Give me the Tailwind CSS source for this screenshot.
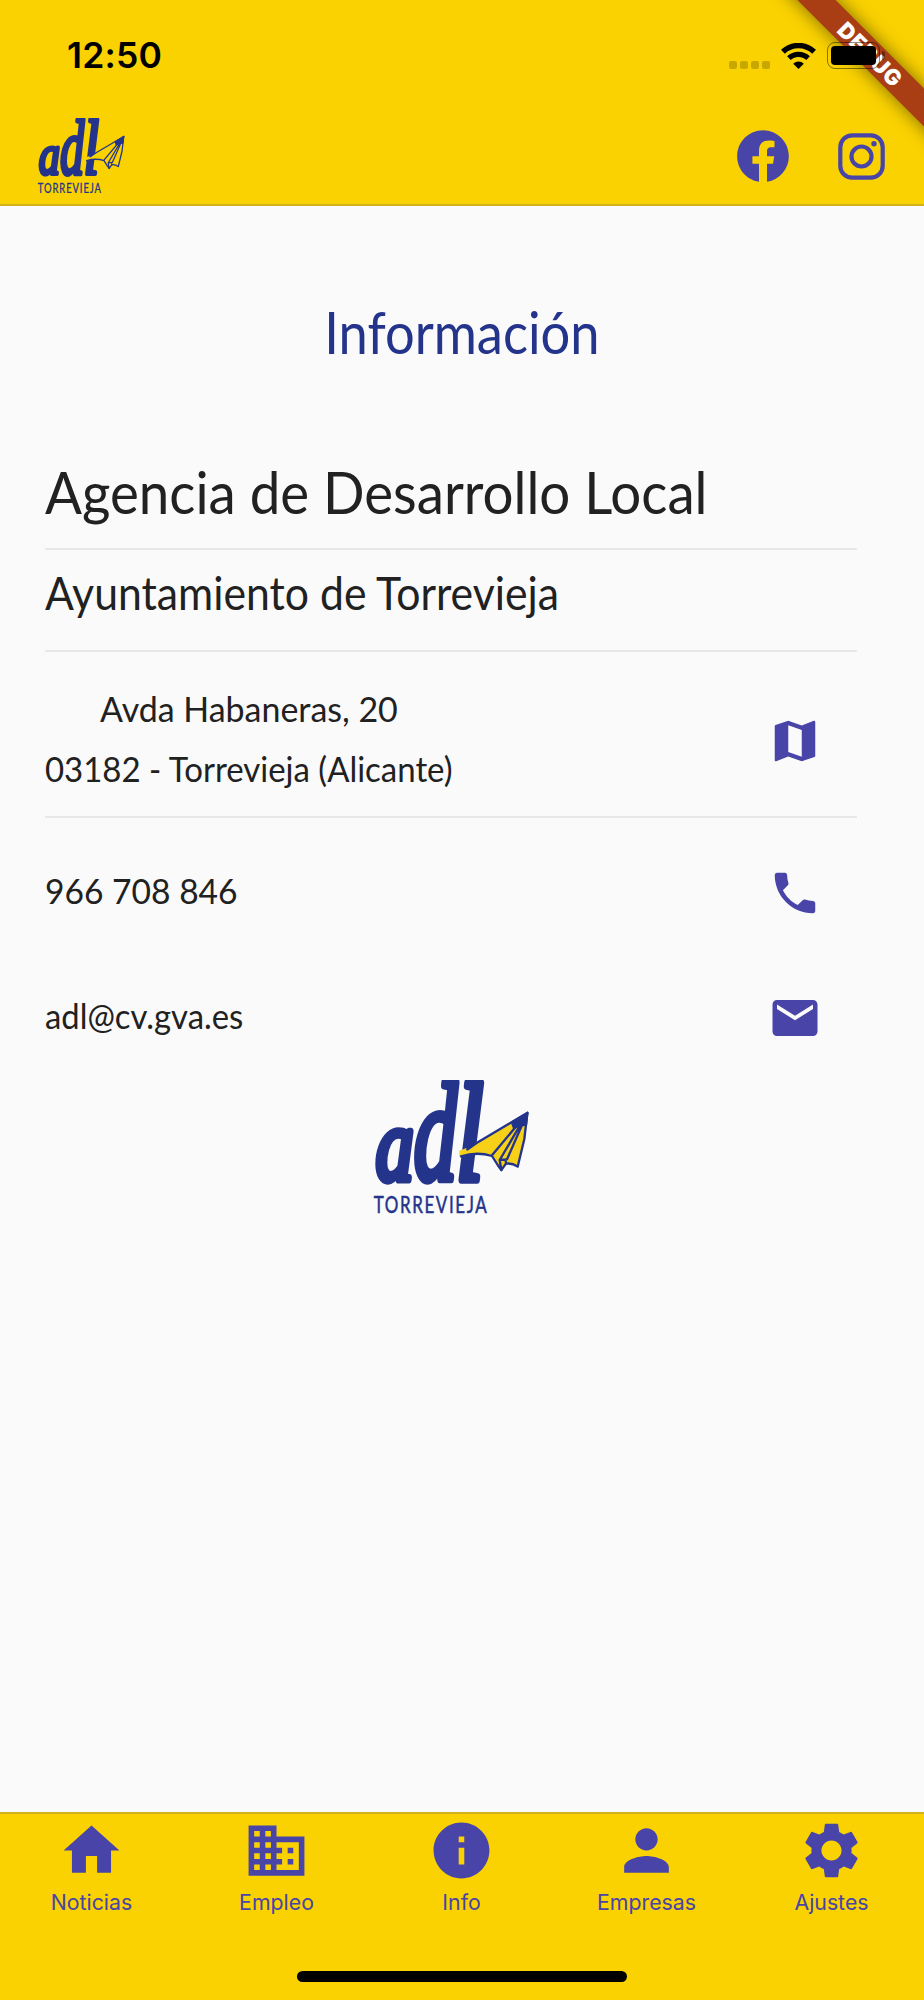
<!DOCTYPE html>
<html lang="es">
<head>
<meta charset="utf-8">
<title>ADL Torrevieja</title>
<script src="https://cdn.jsdelivr.net/npm/@tailwindcss/browser@4"></script>
</head>
<body class="bg-[#fafafa]">
<svg class="hidden">
  <symbol id="logo" viewBox="38 28 468 402">
    <g fill="#24348b" stroke="#24348b">
      <g font-family="'Liberation Serif'" font-weight="400" font-style="italic" stroke-width="22" stroke-linejoin="round">
        <text x="46" y="328" font-size="310" textLength="114" lengthAdjust="spacingAndGlyphs">a</text>
        <text x="160" y="328" font-size="420" textLength="130" lengthAdjust="spacingAndGlyphs">d</text>
        <text x="286" y="328" font-size="420" textLength="84" lengthAdjust="spacingAndGlyphs">l</text>
      </g>
      <text transform="scale(.76 1)" x="53" y="428" font-family="Lato" font-size="67" stroke-width="1.5" textLength="446" lengthAdjust="spacing">TORREVIEJA</text>
    </g>
    <g stroke="#24348b" stroke-width="7" stroke-linejoin="round" stroke-linecap="round">
      <path fill="var(--wing)" stroke="none" d="M297 256V240L318 232V240L355 213L501 127L492 205L472 288Q455 276 437 279L423 298L412 283L395 256Q350 242 300 257Z"/>
      <path fill="none" d="M322 236L355 213L501 127L492 205L472 288Q455 276 437 279L423 298L412 283L395 256Q350 242 302 257"/>
      <path fill="none" d="M501 127L395 254M501 127L418 268L423 298M501 127L440 266L418 268M437 279L436 266"/>
      <path fill="#24348b" d="M501 127L455 155L461 172L478 165L497 162Z"/>
    </g>
  </symbol>
</svg>
<div class="flex h-[2000px] w-[924px] flex-col overflow-hidden font-[Lato,sans-serif] text-[#212121]">
  <header class="relative h-[206px] shrink-0 border-b-2 border-[#d2b21c] bg-[#fad201]">
    <!-- debug ribbon -->
    <div class="absolute top-0 right-0 h-[160px] w-[180px] overflow-hidden">
      <div class="absolute top-[40px] left-[-14px] flex h-[27px] w-[280px] rotate-45 items-center justify-center bg-[#a93d14] shadow-[0_0_18px_rgba(0,0,0,0.5)]">
        <span class="pl-[2px] font-[Inter,sans-serif] text-[22px] leading-none font-black tracking-[1px] text-white">DEBUG</span>
      </div>
    </div>
    <div class="relative flex h-[111px] items-center justify-between pl-[67px]">
      <span class="font-[Inter,sans-serif] text-[35.5px] leading-none font-semibold tracking-[0.2px] text-black">12:50</span>
      <div class="flex items-center pr-[39px]">
        <div class="flex gap-[3px] pt-[18px]">
          <i class="size-2 rounded-[2px] bg-black/20"></i><i class="size-2 rounded-[2px] bg-black/20"></i><i class="size-2 rounded-[2px] bg-black/20"></i><i class="size-2 rounded-[2px] bg-black/20"></i>
        </div>
        <svg class="ml-[11px] h-[26px] w-[35px]" viewBox="0 0 35 26" fill="none" stroke="#000">
          <path stroke-width="5.4" d="M1.9 8.800A22.500 22.500 0 0 1 33.100 8.800"/>
          <path stroke-width="5.2" d="M7.900 15.200A13.800 13.800 0 0 1 27.100 15.200"/>
          <path fill="#000" stroke="none" d="M17.500 26L12.200 20.700A7.500 7.500 0 0 1 22.800 20.700Z"/>
        </svg>
        <div class="ml-[11px] h-[27px] w-[53px] rounded-[8px] border-[1.5px] border-black/45 p-[3px]"><div class="h-[19px] w-[45px] rounded-[4px] bg-black"></div></div>
        <i class="ml-[2px] h-[9px] w-[3px] rounded-r bg-black/40"></i>
      </div>
    </div>
    <div class="relative -mt-px flex items-start pl-[37px]">
      <svg class="mt-2 h-[75px] w-[88px] [--wing:#fad201]"><use href="#logo"/></svg>
      <svg class="mt-[15px] ml-[607px] size-[62px]" viewBox="0 0 24 24" fill="#4844a8"><path d="M12 2.04C6.5 2.04 2 6.53 2 12.06C2 17.06 5.66 21.21 10.44 21.96V14.96H7.9V12.06H10.44V9.85C10.44 7.34 11.93 5.96 14.22 5.96C15.31 5.96 16.45 6.15 16.45 6.15V8.62H15.19C13.95 8.62 13.56 9.39 13.56 10.18V12.06H16.34L15.89 14.96H13.56V21.96A10 10 0 0 0 22 12.06C22 6.53 17.5 2.04 12 2.04Z"/></svg>
      <svg class="mt-[23px] ml-[44px] size-[47px]" viewBox="0 0 47 47" fill="none" stroke="#4844a8" stroke-width="4.2"><rect x="2.3" y="2.3" width="42.4" height="42.4" rx="12"/><circle cx="23.5" cy="23.5" r="10"/><circle cx="36" cy="10.8" r="2.7" fill="#4844a8" stroke="none"/></svg>
    </div>
  </header>

  <main class="grow pt-[82px]">
    <h1 class="h-[86px] origin-[461px_50%] scale-x-[0.904] text-center text-[58px] leading-[88px] text-[#24348b]">Información</h1>
    <div class="mt-[81px] mr-[67px] ml-[45px] whitespace-nowrap">
      <h2 class="h-[95px] border-b-2 border-[#e8e8e8] pt-[2px] text-[58px] leading-[70px]"><span class="inline-block origin-left scale-x-[0.942]">Agencia de Desarrollo Local</span></h2>
      <h3 class="h-[102px] border-b-2 border-[#e8e8e8] pt-[13px] text-[46px] leading-[60px]"><span class="inline-block origin-left scale-x-[0.929]">Ayuntamiento de Torrevieja</span></h3>
      <div class="flex h-[166px] items-start justify-between border-b-2 border-[#e8e8e8] pr-[35px]">
        <p class="mt-[26px] origin-left scale-x-[0.942] text-center text-[35px] leading-[60px]"><span class="inline-block scale-x-[1.03]">Avda Habaneras, 20</span><br>03182 - Torrevieja (Alicante)</p>
        <svg class="mt-[62px] size-[54px]" viewBox="0 0 24 24" fill="#4844a8"><path d="M20.5 3l-.16.03L15 5.1 9 3 3.36 4.9c-.21.07-.36.25-.36.48V20.5c0 .28.22.5.5.5l.16-.03L9 18.9l6 2.1 5.64-1.9c.21-.07.36-.25.36-.48V3.5c0-.28-.22-.5-.5-.5zM15 19l-6-2.11V5l6 2.11V19z"/></svg>
      </div>
      <div class="mt-[11px] flex h-[125px] items-center justify-between pr-[35px] text-[35px]">
        <span class="origin-left scale-x-[0.96] pb-[3px]">966 708 846</span>
        <svg class="mt-[3px] size-[54px]" viewBox="0 0 24 24" fill="#4844a8"><path d="M6.62 10.79c1.44 2.83 3.76 5.14 6.59 6.59l2.2-2.2c.27-.27.67-.36 1.02-.24 1.12.37 2.33.57 3.57.57.55 0 1 .45 1 1V20c0 .55-.45 1-1 1-9.39 0-17-7.61-17-17 0-.55.45-1 1-1h3.5c.55 0 1 .45 1 1 0 1.25.2 2.45.57 3.57.11.35.03.74-.25 1.02l-2.2 2.2z"/></svg>
      </div>
      <div class="flex h-[125px] items-center justify-between pr-[35px] text-[35px]">
        <span class="origin-left scale-x-[0.937] pb-[3px]">adl@cv.gva.es</span>
        <svg class="mt-[3px] size-[54px]" viewBox="0 0 24 24" fill="#4844a8"><path d="M20 4H4c-1.1 0-1.99.9-1.99 2L2 18c0 1.1.9 2 2 2h16c1.1 0 2-.9 2-2V6c0-1.1-.9-2-2-2zm0 4l-8 5-8-5V6l8 5 8-5v2z"/></svg>
      </div>
    </div>
    <svg class="mt-px ml-[373px] h-[134px] w-[156px] [--wing:#f7d117]"><use href="#logo"/></svg>
  </main>

  <nav class="relative h-[188px] shrink-0 border-t-2 border-[#d2b21c] bg-[#fad201] font-[Inter,sans-serif] text-[21.3px] leading-[26px] text-[#4844a8]">
    <div class="-ml-px grid grid-cols-5 pt-[3px]">
      <a class="flex flex-col items-center gap-[5px]"><svg class="size-[67px]" viewBox="0 0 24 24" fill="currentColor"><path d="M10 20v-6h4v6h5v-8h3L12 3 2 12h3v8z"/></svg><span>Noticias</span></a>
      <a class="flex flex-col items-center gap-[5px]"><svg class="size-[67px]" viewBox="0 0 24 24" fill="currentColor"><path d="M12 7V3H2v18h20V7H12zM6 19H4v-2h2v2zm0-4H4v-2h2v2zm0-4H4V9h2v2zm0-4H4V5h2v2zm4 12H8v-2h2v2zm0-4H8v-2h2v2zm0-4H8V9h2v2zm0-4H8V5h2v2zm10 12h-8v-2h2v-2h-2v-2h2v-2h-2V9h8v10zm-2-8h-2v2h2v-2zm0 4h-2v2h2v-2z"/></svg><span>Empleo</span></a>
      <a class="flex flex-col items-center gap-[5px]"><svg class="size-[67px]" viewBox="0 0 24 24" fill="currentColor"><path d="M12 2C6.48 2 2 6.48 2 12s4.48 10 10 10 10-4.48 10-10S17.52 2 12 2zm1 15h-2v-6h2v6zm0-8h-2V7h2v2z"/></svg><span>Info</span></a>
      <a class="flex flex-col items-center gap-[5px]"><svg class="size-[67px]" viewBox="0 0 24 24" fill="currentColor"><path d="M12 12c2.21 0 4-1.79 4-4s-1.79-4-4-4-4 1.79-4 4 1.79 4 4 4zm0 2c-2.67 0-8 1.34-8 4v2h16v-2c0-2.66-5.33-4-8-4z"/></svg><span>Empresas</span></a>
      <a class="flex flex-col items-center gap-[5px]"><svg class="size-[67px]" viewBox="0 0 24 24" fill="currentColor"><path d="M19.14 12.94c.04-.3.06-.61.06-.94 0-.32-.02-.64-.07-.94l2.03-1.58c.18-.14.23-.41.12-.61l-1.92-3.32c-.12-.22-.37-.29-.59-.22l-2.39.96c-.5-.38-1.03-.7-1.62-.94l-.36-2.54c-.04-.24-.24-.41-.48-.41h-3.84c-.24 0-.43.17-.47.41l-.36 2.54c-.59.24-1.13.57-1.62.94l-2.39-.96c-.22-.08-.47 0-.59.22L2.74 8.87c-.12.21-.08.47.12.61l2.03 1.58c-.05.3-.09.63-.09.94s.02.64.07.94l-2.03 1.58c-.18.14-.23.41-.12.61l1.92 3.32c.12.22.37.29.59.22l2.39-.96c.5.38 1.03.7 1.62.94l.36 2.54c.05.24.24.41.48.41h3.84c.24 0 .44-.17.47-.41l.36-2.54c.59-.24 1.13-.56 1.62-.94l2.39.96c.22.08.47 0 .59-.22l1.92-3.32c.12-.22.07-.47-.12-.61l-2.01-1.58zM12 15.6c-1.98 0-3.6-1.62-3.6-3.6s1.62-3.6 3.6-3.6 3.6 1.62 3.6 3.6-1.62 3.6-3.6 3.6z"/></svg><span>Ajustes</span></a>
    </div>
    <div class="absolute top-[157px] left-[297px] h-[11px] w-[330px] rounded-full bg-black"></div>
  </nav>
</div>
</body>
</html>
